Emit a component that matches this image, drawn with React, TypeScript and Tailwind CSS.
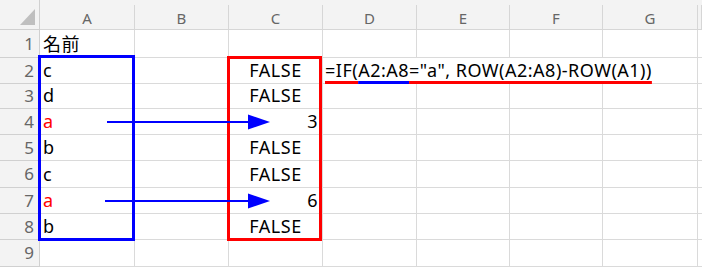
import React from 'react';

// column letters across the top; the last column is only a sliver with no label showing
const COLUMNS = ['A', 'B', 'C', 'D', 'E', 'F', 'G', ''];

const colA: { text: string; red?: boolean }[] = [
  { text: '名前' },
  { text: 'c' },
  { text: 'd' },
  { text: 'a', red: true },
  { text: 'b' },
  { text: 'c' },
  { text: 'a', red: true },
  { text: 'b' },
  { text: '' },
];

// spilled results from the formula in C2
const colC = ['', 'FALSE', 'FALSE', '3', 'FALSE', 'FALSE', '6', 'FALSE', ''];

const cellBase =
  'bg-white border-r border-b border-[#dadada] flex items-end pb-[1px] px-[3px] text-[18px] leading-[24px] tracking-[0.5px] whitespace-nowrap';

const Formula: React.FC = () => (
  <span className="[text-decoration-skip-ink:none]">
    <span className="underline decoration-[#ff0000] decoration-[3px] underline-offset-[4px]">=IF(</span>
    <span className="underline decoration-[#0000ff] decoration-[3px] underline-offset-[4px]">A2:A8</span>
    <span className="underline decoration-[#ff0000] decoration-[3px] underline-offset-[4px]">
      ="a", ROW(A2:A8)-ROW(A1))
    </span>
  </span>
);

const Arrow: React.FC<{ y: number; x1: number }> = ({ y, x1 }) => (
  <>
    <line x1={x1} y1={y} x2={250} y2={y} stroke="#0000ff" strokeWidth={2} />
    <polygon points={`248,${y - 7.5} 270,${y} 248,${y + 7.5}`} fill="#0000ff" />
  </>
);

export default function App() {
  const rows = colA.map((_, i) => i);

  return (
    <div className="relative w-[702px] h-[267px] overflow-hidden bg-white font-['Noto_Sans','Noto_Sans_CJK_JP',sans-serif]">
      <div className="grid grid-cols-[40px_95px_94px_94px_94px_93px_93px_95px_4px] grid-rows-[30px_28px_26px_25px_26px_26px_27px_26px_26px_27px] bg-[#f3f3f3]">
        {/* select-all corner */}
        <div className="relative border-r border-b border-[#d0d0d0]">
          <svg className="absolute left-[20px] top-[9px]" width="15" height="16" viewBox="0 0 15 16">
            <polygon points="15,0 15,16 0,16" fill="#bfbfbf" />
          </svg>
        </div>
        {COLUMNS.map((c, i) => (
          <div
            key={i}
            className="mt-[5px] border-r border-b border-[#d6d6d6] flex items-center justify-center pt-[3px] text-[15px] text-[#666666]"
          >
            {c}
          </div>
        ))}

        {rows.map((r) => (
          <React.Fragment key={r}>
            <div className="border-r border-b border-[#d0d0d0] bg-[#f3f3f3] flex items-center justify-end pr-[5px] text-[17px] text-[#666666]">
              {r + 1}
            </div>
            <div
              className={`${cellBase} ${r === 0 ? 'bg-[#f2f2f2]' : ''} ${
                colA[r].red ? 'text-[#ff0000]' : 'text-black'
              }`}
            >
              {colA[r].text}
            </div>
            <div className={cellBase} />
            <div
              className={`${cellBase} text-black ${
                colC[r] === 'FALSE' ? 'justify-center' : 'justify-end pr-[4px]'
              }`}
            >
              {colC[r]}
            </div>
            {r === 1 ? (
              <div className={`${cellBase} text-black col-span-4 overflow-visible pl-[2px]`}>
                <Formula />
              </div>
            ) : (
              <>
                <div className={cellBase} />
                <div className={cellBase} />
                <div className={cellBase} />
                <div className={cellBase} />
              </>
            )}
            <div className={cellBase} />
          </React.Fragment>
        ))}
      </div>

      {/* source range A2:A8 */}
      <div className="absolute left-[38px] top-[55px] w-[97px] h-[186px] border-[3px] border-[#0000ff]" />
      {/* result range C2:C8 */}
      <div className="absolute left-[227px] top-[56px] w-[95px] h-[185px] border-[3px] border-[#ff0000]" />

      <svg className="absolute left-0 top-0 pointer-events-none" width="702" height="267">
        <Arrow y={122} x1={107} />
        <Arrow y={201} x1={105} />
      </svg>
    </div>
  );
}
